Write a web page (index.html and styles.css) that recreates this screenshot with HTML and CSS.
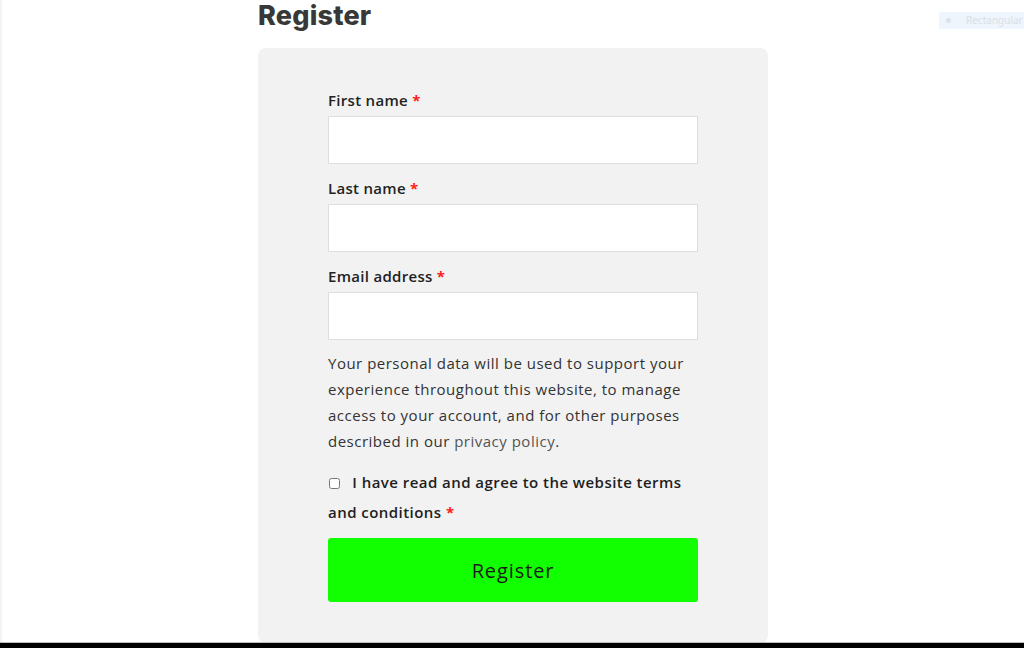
FILE: index.html
```html
<!DOCTYPE html>
<html lang="en">
<head>
<meta charset="utf-8">
<title>Register</title>
<link rel="stylesheet" href="styles.css">
</head>
<body>
<main class="page">
  <h1 class="title">Register</h1>
  <form class="card">
    <div class="field">
      <label class="label" for="fn">First name <span class="req">*</span></label>
      <input class="input" id="fn" type="text">
    </div>
    <div class="field">
      <label class="label" for="ln">Last name <span class="req">*</span></label>
      <input class="input" id="ln" type="text">
    </div>
    <div class="field">
      <label class="label" for="em">Email address <span class="req">*</span></label>
      <input class="input" id="em" type="email">
    </div>
    <p class="privacy">Your personal data will be used to support your experience throughout this website, to manage access to your account, and for other purposes described in our <a class="link" href="#">privacy policy</a>.</p>
    <label class="terms"><input class="check" type="checkbox"> I have read and agree to the website terms and conditions <span class="req">*</span></label>
    <button class="btn" type="button">Register</button>
  </form>
</main>
<div class="chip"><span class="chip-dot"></span>Rectangular Snip</div>
<div class="bottom-bar"></div>
</body>
</html>
```
FILE: styles.css
```css
html, body {
  margin: 0;
  padding: 0;
  background: #ffffff;
}
body {
  border-left: 2px solid #f3f3f3;
  min-height: 648px;
  box-sizing: border-box;
  font-family: "Open Sans", "Liberation Sans", sans-serif;
  color: #2b2b2b;
}
.page {
  width: 510px;
  margin: 0 auto;
}
.title {
  margin: 0;
  height: 48px;
  font-family: Inter, "Open Sans", sans-serif;
  font-weight: 800;
  font-size: 27px;
  line-height: 31px;
  color: #383838;
  letter-spacing: 0.2px;
}
.card {
  background: #f2f2f2;
  border-radius: 8px;
  padding: 41px 70px 41px 70px;
  display: flex;
  flex-direction: column;
}
.field + .field {
  margin-top: 13px;
}
.field {
  display: flex;
  flex-direction: column;
}
.label {
  font-size: 15px;
  line-height: 22px;
  font-weight: 600;
  color: #222;
  margin-bottom: 5px;
  letter-spacing: 0.3px;
}
.req {
  color: #ff1a1a;
  font-weight: 700;
}
.input {
  box-sizing: border-box;
  height: 48px;
  width: 100%;
  border: 1px solid #dedede;
  background: #fff;
  margin: 0;
}
.privacy {
  margin: 10px 0 0;
  font-size: 15px;
  line-height: 26px;
  color: #333;
  letter-spacing: 0.5px;
}
.link {
  color: #555;
  text-decoration: none;
}
.terms {
  margin-top: 13px;
  font-size: 15px;
  line-height: 30px;
  font-weight: 600;
  color: #1e1e1e;
  letter-spacing: 0.45px;
  padding-right: 8px;
}
.check {
  width: 11px;
  height: 11px;
  margin: 0 8px 0 1px;
  vertical-align: -1px;
}
.btn {
  margin-top: 11px;
  height: 64px;
  border: none;
  border-radius: 3px;
  background: #11ff00;
  font-family: "Open Sans", "Liberation Sans", sans-serif;
  font-size: 20px;
  color: #1a1a1a;
  letter-spacing: 0.9px;
}
.chip {
  position: absolute;
  top: 12px;
  left: 939px;
  width: 85px;
  height: 17px;
  background: #eef5fd;
  color: #dadfe5;
  font-family: "Noto Sans", sans-serif;
  font-size: 10px;
  line-height: 17px;
  white-space: nowrap;
  overflow: hidden;
  display: flex;
  align-items: center;
}
.chip-dot {
  width: 5px;
  height: 5px;
  border-radius: 50%;
  background: #dde3ea;
  margin: 0 15px 0 7px;
  flex: none;
}
.bottom-bar {
  position: fixed;
  left: 0;
  right: 0;
  bottom: 0;
  height: 5px;
  background: #000;
  border-top: 1px solid #bdbdbd;
}
```
